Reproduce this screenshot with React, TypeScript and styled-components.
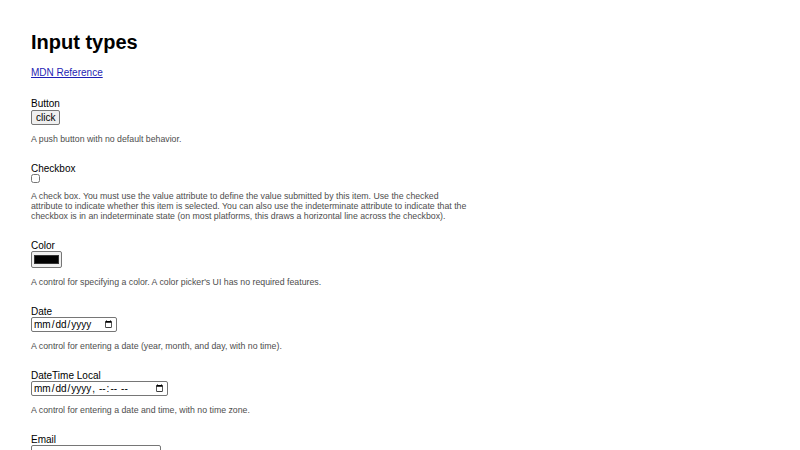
import React from "react";
import styled, { createGlobalStyle } from "styled-components";

const GlobalStyle = createGlobalStyle`
    html, body {
        margin: 0;
        padding: 0;
        background: #fff;
    }
    body {
        font-family: "Liberation Sans", Arial, sans-serif;
        color: #111;
    }
`

const Page = styled.main`
    padding: 30px 31px;
    max-width: 437px;
`

const Title = styled.h1`
    margin: 0 0 13px;
    font-size: 20px;
    line-height: 24px;
    font-weight: 700;
    color: #000;
`

const RefLink = styled.a`
    display: block;
    font-size: 10px;
    line-height: 12px;
    color: #1f1fb4;
    text-decoration: underline;
    margin-bottom: 19px;
`

const Field = styled.section`
    margin-bottom: 19px;
`

const Label = styled.label`
    display: block;
    font-size: 10px;
    line-height: 12px;
    color: #000;
`

const Description = styled.p`
    margin: 9px 0 0;
    font-size: 8.75px;
    line-height: 10px;
    color: #4d4d4d;
`

const Button = styled.button`
    display: block;
    box-sizing: border-box;
    height: 15px;
    padding: 0 4px;
    font-family: "Liberation Sans", Arial, sans-serif;
    font-size: 10px;
    line-height: 12px;
    color: #000;
    background: #efefef;
    border: 1px solid #767676;
    border-radius: 2px;
`

const Checkbox = styled.input`
    display: block;
    width: 9px;
    height: 9px;
    margin: -1px 0 -1px;
`

const ColorInput = styled.input`
    display: block;
    box-sizing: border-box;
    width: 31px;
    height: 17px;
    margin: -1px 0 0;
    padding: 2px 2px;
    background: #efefef;
    border: 1px solid #767676;
    border-radius: 2px;

    &::-webkit-color-swatch-wrapper {
        padding: 1px 0;
    }
    &::-webkit-color-swatch {
        border: 1px solid #333;
        border-radius: 0;
    }
`

const TextInput = styled.input<{ $width: number }>`
    display: block;
    box-sizing: border-box;
    width: ${p => p.$width}px;
    height: 15px;
    margin: -1px 0 0;
    padding: 0 1px;
    font-family: "Liberation Sans", Arial, sans-serif;
    font-size: 10px;
    color: #000;
    background: #fff;
    border: 1px solid #767676;
    border-radius: 2px;

    &::-webkit-calendar-picker-indicator {
        width: 9px;
        height: 9px;
        padding: 0;
        margin: 0 2px 0 0;
    }
`

const App: React.FC = () => {
    return (
        <>
            <GlobalStyle />
            <Page>
                <Title>Input types</Title>
                <RefLink href="#">MDN Reference</RefLink>

                <Field>
                    <Label>Button</Label>
                    <Button type="button">click</Button>
                    <Description>A push button with no default behavior.</Description>
                </Field>

                <Field>
                    <Label>Checkbox</Label>
                    <Checkbox type="checkbox" />
                    <Description>
                        A check box. You must use the value attribute to define the value submitted by this item.
                        Use the checked attribute to indicate whether this item is selected. You can also use the
                        indeterminate attribute to indicate that the checkbox is in an indeterminate state (on most
                        platforms, this draws a horizontal line across the checkbox).
                    </Description>
                </Field>

                <Field>
                    <Label>Color</Label>
                    <ColorInput type="color" defaultValue="#000000" />
                    <Description>A control for specifying a color. A color picker's UI has no required features.</Description>
                </Field>

                <Field>
                    <Label>Date</Label>
                    <TextInput type="date" $width={86} />
                    <Description>A control for entering a date (year, month, and day, with no time).</Description>
                </Field>

                <Field>
                    <Label>DateTime Local</Label>
                    <TextInput type="datetime-local" $width={137} />
                    <Description>A control for entering a date and time, with no time zone.</Description>
                </Field>

                <Field>
                    <Label>Email</Label>
                    <TextInput type="email" $width={130} />
                    <Description>A field for editing an email address.</Description>
                </Field>
            </Page>
        </>
    );
}

export default App;
